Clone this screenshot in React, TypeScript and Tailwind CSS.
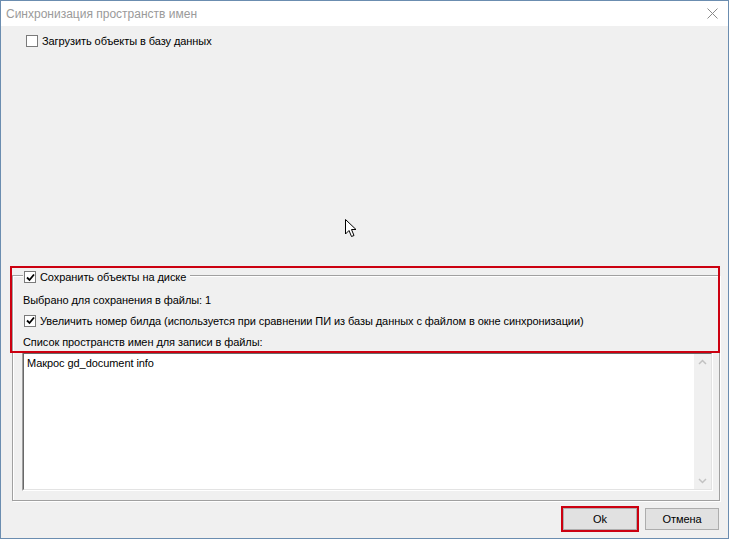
import React from "react";

const font = { fontFamily: '"Liberation Sans", Arial, sans-serif' };

const CheckBox = ({ checked }: { checked?: boolean }) => (
  <span className="w-[12px] h-[12px] border border-[#7a7a7a] bg-white flex items-center justify-center shrink-0">
    {checked && (
      <svg width="9" height="9" viewBox="0 0 9 9">
        <path d="M1 4.5 L3.5 7 L8 1.5" stroke="#000" strokeWidth="1.8" fill="none" />
      </svg>
    )}
  </span>
);

const Cursor = () => (
  <svg
    className="absolute left-[343px] top-[217px]"
    width="14"
    height="21"
    viewBox="0 0 14 21"
  >
    <path
      d="M1.5 1.5 L1.5 16 L5 12.5 L7.5 18.5 L10 17.5 L7.5 11.5 L12 11.5 Z"
      fill="#fff"
      stroke="#000"
      strokeWidth="1"
      strokeLinejoin="round"
    />
  </svg>
);

export default function App() {
  return (
    <div
      className="relative w-[729px] h-[539px] border border-[#6b8db0] bg-[#f0f0f0] flex flex-col text-[11px] tracking-[-0.07px] text-black"
      style={font}
    >
      {/* title bar */}
      <div className="h-[25px] bg-white flex items-center justify-between pl-[5px] pr-[10px] shrink-0">
        <span className="text-[12px] tracking-normal text-[#9a9a9a]">Синхронизация пространств имен</span>
        <svg width="11" height="11" viewBox="0 0 11 11">
          <path d="M0.5 0.5 L10.5 10.5 M10.5 0.5 L0.5 10.5" stroke="#8a8a8a" strokeWidth="1" />
        </svg>
      </div>

      <div className="flex-1 flex flex-col">
        <div className="flex items-center gap-[4px] pl-[25px] pt-[7px]">
          <CheckBox />
          <span>Загрузить объекты в базу данных</span>
        </div>

        <div className="flex-1" />

        {/* group box */}
        <div className="relative ml-[11px] mr-[8px] h-[226px] border border-[#a0a0a0] shadow-[inset_1px_1px_0_#fff,1px_1px_0_#fff] flex flex-col">
          <div className="absolute -left-[3px] -top-[10px] w-[710px] h-[87px] border-2 border-[#cc0010] pointer-events-none" />
          <div className="flex items-center gap-[4px] -mt-[7px] ml-[10px] pl-[1px] pr-[4px] bg-[#f0f0f0] self-start">
            <CheckBox checked />
            <span>Сохранить объекты на диске</span>
          </div>
          <div className="ml-[10px] mt-[8px] leading-[13px]">Выбрано для сохранения в файлы: 1</div>
          <div className="flex items-center gap-[4px] ml-[11px] mt-[6px]">
            <CheckBox checked />
            <span>
              Увеличить номер билда (используется при сравнении ПИ из базы данных с файлом в окне
              синхронизации)
            </span>
          </div>
          <div className="ml-[10px] mt-[7px] leading-[13px]">Список пространств имен для записи в файлы:</div>

          {/* memo */}
          <div className="ml-[9px] mr-[6px] mt-[3px] mb-[9px] flex-1 flex border-t border-l border-[#a0a0a0] border-b border-r border-b-[#fff] border-r-[#fff]">
            <div className="flex-1 flex border-t border-l border-[#696969] border-b border-r border-b-[#e3e3e3] border-r-[#e3e3e3] bg-white">
              <div className="flex-1 pl-[3px] pt-[3px] leading-[13px]">Макрос gd_document info</div>
              <div className="w-[17px] bg-[#f0f0f0] flex flex-col justify-between items-center py-[5px]">
                <svg width="9" height="6" viewBox="0 0 9 6">
                  <path d="M1 5 L4.5 1.5 L8 5" stroke="#c2c2c2" strokeWidth="1.5" fill="none" />
                </svg>
                <svg width="9" height="6" viewBox="0 0 9 6">
                  <path d="M1 1 L4.5 4.5 L8 1" stroke="#c2c2c2" strokeWidth="1.5" fill="none" />
                </svg>
              </div>
            </div>
          </div>
        </div>

        {/* buttons */}
        <div className="flex justify-end gap-[8px] pt-[7px] pb-[8px] pr-[9px]">
          <button className="w-[74px] h-[22px] bg-[#e1e1e1] border border-[#adadad] outline-2 outline-[#cc0010] outline-offset-0">
            Ok
          </button>
          <button className="w-[74px] h-[22px] bg-[#e1e1e1] border border-[#adadad]">Отмена</button>
        </div>
      </div>

      <Cursor />
    </div>
  );
}
